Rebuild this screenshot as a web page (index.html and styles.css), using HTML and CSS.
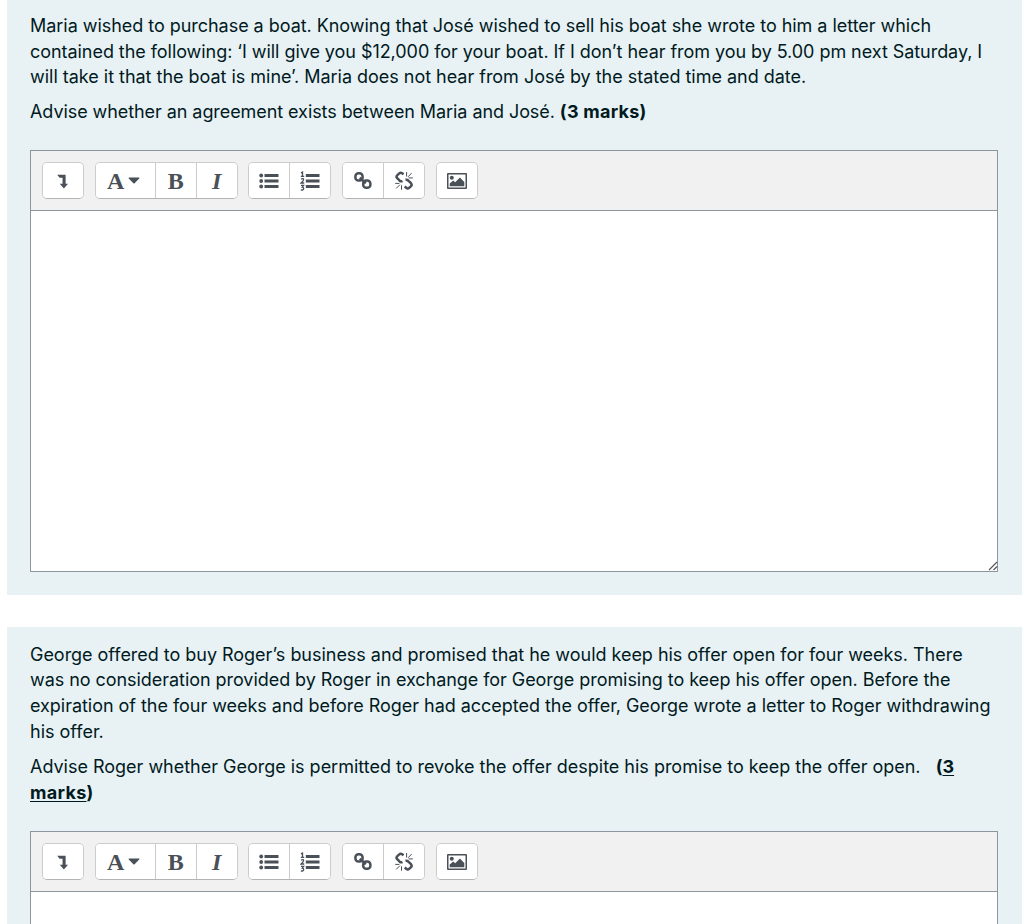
FILE: index.html
```html
<!DOCTYPE html>
<html lang="en">
<head>
    <meta charset="UTF-8">
    <meta name="viewport" content="width=device-width, initial-scale=1.0">
    <title>Quiz</title>
    <link rel="stylesheet" href="styles.css">
</head>
<body>
    <!-- shared toolbar icons -->
    <svg class="sprite" aria-hidden="true">
        <symbol id="i-toggle" viewBox="0 0 20 20">
            <path d="M3.6 3H12.9V13H15.6L11 18.4L6.4 13H9.5V6.4H6.2Z"/>
        </symbol>
        <symbol id="i-caret" viewBox="0 0 12 7">
            <path d="M1 .5H11Q11.6 .8 11.2 1.4L6.6 6.2Q6 6.8 5.4 6.2L.8 1.4Q.4 .8 1 .5Z"/>
        </symbol>
        <symbol id="i-ul" viewBox="0 0 20 20">
            <circle cx="2.2" cy="4.5" r="1.9"/><circle cx="2.2" cy="10" r="1.9"/><circle cx="2.2" cy="15.5" r="1.9"/>
            <path d="M5.5 3.1H19.5V5.9H5.5ZM5.5 8.6H19.5V11.4H5.5ZM5.5 14.1H19.5V16.9H5.5Z"/>
        </symbol>
        <symbol id="i-ol" viewBox="0 0 20 20">
            <path d="M5.8 3.1H19.5V5.9H5.8ZM5.8 8.6H19.5V11.4H5.8ZM5.8 14.1H19.5V16.9H5.8Z"/>
            <path class="line" d="M1 1.8L2.5 1.1V5.3M.8 5.3H4.2M1 8.1Q3.6 6.9 3.6 8.8Q3.5 9.8 1.1 12H4.2M1 14.4H3.6L2.2 16.2Q3.8 16.4 3.7 17.7Q3.4 19.4 .8 18.9"/>
        </symbol>
        <symbol id="i-link" viewBox="0 0 20 20">
            <g class="ring">
                <rect x="2.4" y="2.3" width="7.2" height="7.2" rx="3.1"/>
                <rect x="10.2" y="9.6" width="7.2" height="7.2" rx="3.1"/>
                <path d="M6.8 6.8L12.8 12.2"/>
            </g>
        </symbol>
        <symbol id="i-unlink" viewBox="0 0 20 20">
            <g class="ring">
                <path d="M9.5 3.4L8.2 2.3Q6.7 1.2 5.2 2.4L3.4 4.1Q1.8 5.6 3.2 7.2L5.7 9.7Q7 10.8 8.5 10"/>
                <path d="M11.5 8.8Q13.3 8.4 14.6 9.8L17 12.2Q18.3 13.7 17 15.1L15.2 16.8Q13.7 18.1 12.2 16.8L10.7 15.5"/>
            </g>
            <path class="ray" d="M12.6 1V5.5M17.6 2.1L14.1 5.8M18.8 6.9H14.6M1.2 12.4H5.4M5.9 13.7L2.2 17.4M7.5 14.3V18.7"/>
        </symbol>
        <symbol id="i-image" viewBox="0 0 22 18">
            <path fill-rule="evenodd" d="M2 1H20Q21 1 21 2V16Q21 17 20 17H2Q1 17 1 16V2Q1 1 2 1ZM2.5 2.5V15.5H19.5V2.5Z"/>
            <circle cx="5.8" cy="5.8" r="2"/>
            <path d="M3.7 14.2V11.5L7.2 8.5L9.2 10.2L13.9 5.4L18.3 9.9V14.2Z"/>
        </symbol>
    </svg>

    <div class="formulation">
        <div class="qtext">
            <p>
                <span class="row r1">Maria wished to purchase a boat. Knowing that José wished to sell his boat she wrote to him a letter which</span>
                <span class="row r2">contained the following: ‘I will give you $12,000 for your boat. If I don’t hear from you by 5.00 pm next Saturday, I</span>
                <span class="row r3">will take it that the boat is mine’. Maria does not hear from José by the stated time and date.</span>
            </p>
            <p><span class="row r4">Advise whether an agreement exists between Maria and José. <strong>(3 marks)</strong></span></p>
        </div>
        <div class="editor">
            <div class="toolbar">
                <div class="group"><button><svg class="toggle"><use href="#i-toggle"/></svg></button></div>
                <div class="group">
                    <button class="style"><span class="letter">A</span><svg class="caret"><use href="#i-caret"/></svg></button>
                    <button><span class="letter">B</span></button>
                    <button><span class="letter italic">I</span></button>
                </div>
                <div class="group">
                    <button><svg><use href="#i-ul"/></svg></button>
                    <button><svg><use href="#i-ol"/></svg></button>
                </div>
                <div class="group">
                    <button><svg><use href="#i-link"/></svg></button>
                    <button><svg><use href="#i-unlink"/></svg></button>
                </div>
                <div class="group"><button><svg class="image"><use href="#i-image"/></svg></button></div>
            </div>
            <div class="content" contenteditable="true"></div>
            <svg class="grip" viewBox="0 0 10 10"><path d="M1 9L9 1M5.5 9L9 5.5"/></svg>
        </div>
    </div>

    <div class="formulation last">
        <div class="qtext">
            <p>
                <span class="row r5">George offered to buy Roger’s business and promised that he would keep his offer open for four weeks. There</span>
                <span class="row r6">was no consideration provided by Roger in exchange for George promising to keep his offer open. Before the</span>
                <span class="row r7">expiration of the four weeks and before Roger had accepted the offer, George wrote a letter to Roger withdrawing</span>
                <span class="row">his offer.</span>
            </p>
            <p>
                <span class="row r9">Advise Roger whether George is permitted to revoke the offer despite his promise to keep the offer open. &nbsp; <strong>(<u>3</u></strong></span>
                <span class="row r10"><strong><u>marks</u>)</strong></span>
            </p>
        </div>
        <div class="editor">
            <div class="toolbar">
                <div class="group"><button><svg class="toggle"><use href="#i-toggle"/></svg></button></div>
                <div class="group">
                    <button class="style"><span class="letter">A</span><svg class="caret"><use href="#i-caret"/></svg></button>
                    <button><span class="letter">B</span></button>
                    <button><span class="letter italic">I</span></button>
                </div>
                <div class="group">
                    <button><svg><use href="#i-ul"/></svg></button>
                    <button><svg><use href="#i-ol"/></svg></button>
                </div>
                <div class="group">
                    <button><svg><use href="#i-link"/></svg></button>
                    <button><svg><use href="#i-unlink"/></svg></button>
                </div>
                <div class="group"><button><svg class="image"><use href="#i-image"/></svg></button></div>
            </div>
            <div class="content" contenteditable="true"></div>
        </div>
    </div>
</body>
</html>
```
FILE: styles.css
```css
* {
    box-sizing: border-box;
}
body {
    margin: 0;
    height: 924px;
    display: flex;
    flex-direction: column;
    background: #fff;
    color: #001a1e;
    font-family: Inter, "Liberation Sans", sans-serif;
    font-size: 18px;
    line-height: 25.8px;
}
.sprite {
    display: none;
}
.formulation {
    margin: 0 2.5px 32px 6.5px;
    padding: 12.8px 23.5px 23px;
    background: #e8f1f4;
}
.formulation.last {
    display: flex;
    flex-direction: column;
    flex: 1;
    margin-bottom: 0;
    padding-top: 15px;
    padding-bottom: 0;
}
.qtext {
    margin-bottom: 24.7px;
}
.last .qtext {
    margin-bottom: 25.4px;
}
p {
    margin: 0 0 9px;
}
p:last-child {
    margin-bottom: 0;
}
.row {
    display: block;
    white-space: nowrap;
}
/* tracking per line */
.r1 { letter-spacing: -0.038px; }
.r2 { letter-spacing: -0.05px; }
.r3 { letter-spacing: -0.02px; }
.r4 { letter-spacing: -0.07px; }
.r4 strong { letter-spacing: 0.25px; }
.r5 { letter-spacing: -0.028px; }
.r6 { letter-spacing: -0.05px; }
.r7 { letter-spacing: -0.033px; }
.r9 { letter-spacing: -0.012px; }
.r10 { letter-spacing: 0.3px; }
strong {
    font-weight: 700;
}
u {
    text-decoration-thickness: 1px;
    text-underline-offset: 2px;
}
.editor {
    position: relative;
    border: 1px solid #8f959e;
}
.toolbar {
    display: flex;
    gap: 10.7px;
    height: 60px;
    padding: 11px;
    background: #f1f1f1;
    border-bottom: 1px solid #8f959e;
}
.last .editor {
    display: flex;
    flex-direction: column;
    flex: 1;
    border-bottom: 0;
}
.group {
    display: flex;
    height: 37px;
    border: 1px solid #ccc;
    border-bottom-color: #b3b3b3;
    border-radius: 5px;
    background: #fff;
    overflow: hidden;
}
button {
    display: flex;
    align-items: center;
    justify-content: center;
    width: 41px;
    padding: 1px 0 0;
    border: 0;
    border-left: 1px solid #ccc;
    background: #fff;
    color: #495057;
}
button:first-child {
    width: 40px;
    border-left: 0;
}
button.style:first-child {
    width: 59px;
    gap: 4px;
    padding-right: 3px;
}
button svg {
    width: 20px;
    height: 20px;
    fill: #495057;
}
button svg.toggle {
    width: 18px;
    height: 18px;
}
button svg.caret {
    width: 12px;
    height: 7px;
}
button svg.image {
    width: 22px;
    height: 18px;
}
.letter {
    font: bold 24px/1 "Liberation Serif", serif;
}
.italic {
    font-style: italic;
}
.line {
    fill: none;
    stroke: #495057;
    stroke-width: 1.3;
}
.ring {
    fill: none;
    stroke: #495057;
    stroke-width: 2.5;
}
.ray {
    fill: none;
    stroke: #495057;
    stroke-width: 1;
}
.content {
    height: 360px;
    background: #fff;
}
.last .content {
    flex: 1;
    height: auto;
}
.grip {
    position: absolute;
    right: -1px;
    bottom: 0;
    width: 10px;
    height: 10px;
    fill: none;
    stroke: #555;
    stroke-width: 1.1;
}
```
